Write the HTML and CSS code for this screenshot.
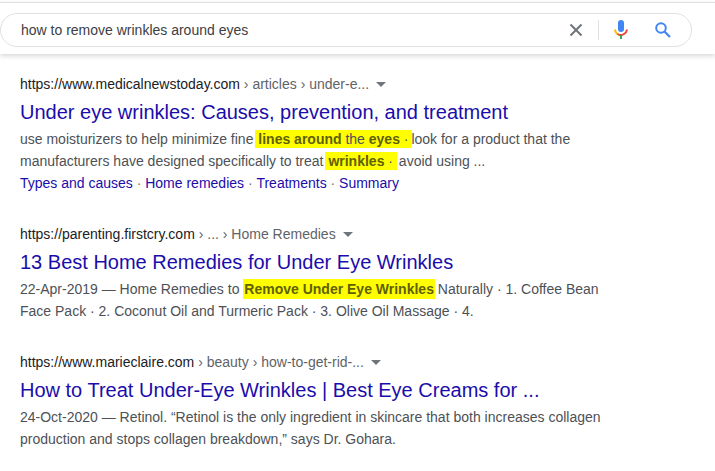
FILE: index.html
```html
<!DOCTYPE html>
<html lang="en">
<head>
<meta charset="utf-8">
<title>how to remove wrinkles around eyes</title>
<link rel="stylesheet" href="styles.css">
</head>
<body>
<header class="header">
  <div class="search">
    <span class="query">how to remove wrinkles around eyes</span>
    <svg class="clear" width="14" height="14" viewBox="0 0 14 14"><path d="M1.5 1.5L12.5 12.5M12.5 1.5L1.5 12.5" stroke="#70757a" stroke-width="2" fill="none"/></svg>
    <span class="sep"></span>
    <svg class="mic" width="14" height="20" viewBox="0 0 14 20">
      <rect x="4" y="0" width="6" height="12" rx="3" fill="#4285f4"/>
      <path d="M1 9.5a6 6 0 0 0 3 4.8" stroke="#fbbc05" stroke-width="2" fill="none"/>
      <path d="M3.5 14a6 6 0 0 0 6.5 0 6 6 0 0 0 3-4.5" stroke="#ea4335" stroke-width="2" fill="none"/>
      <rect x="6" y="15" width="2" height="4" fill="#34a853"/>
    </svg>
    <svg class="magnify" width="16" height="16" viewBox="0 0 16 16"><circle cx="6" cy="6" r="4.8" stroke="#4285f4" stroke-width="2" fill="none"/><path d="M9.5 9.5L15 15" stroke="#4285f4" stroke-width="2.2" fill="none"/></svg>
  </div>
</header>
<main class="results">
  <article class="result">
    <div class="cite">https://www.medicalnewstoday.com<span class="crumb"> › articles › under-e...</span><span class="caret"></span></div>
    <h3 class="title">Under eye wrinkles: Causes, prevention, and treatment</h3>
    <p class="snippet">use moisturizers to help minimize fine <mark class="hl"><b>lines around</b> the <b>eyes</b> · </mark> look for a product that the<br>manufacturers have designed specifically to treat <mark class="hl hl-short"><b>wrinkles</b> ·</mark> avoid using ...</p>
    <div class="links"><a class="link">Types and causes</a><span class="dot">·</span><a class="link">Home remedies</a><span class="dot">·</span><a class="link">Treatments</a><span class="dot">·</span><a class="link">Summary</a></div>
  </article>
  <article class="result">
    <div class="cite">https://parenting.firstcry.com<span class="crumb"> › ... › Home Remedies</span><span class="caret"></span></div>
    <h3 class="title">13 Best Home Remedies for Under Eye Wrinkles</h3>
    <p class="snippet">22-Apr-2019 — Home Remedies to <mark class="hl hl-tall"><b>Remove Under Eye Wrinkles</b></mark> Naturally · 1. Coffee Bean<br>Face Pack · 2. Coconut Oil and Turmeric Pack · 3. Olive Oil Massage · 4.</p>
  </article>
  <article class="result">
    <div class="cite">https://www.marieclaire.com<span class="crumb"> › beauty › how-to-get-rid-...</span><span class="caret"></span></div>
    <h3 class="title">How to Treat Under-Eye Wrinkles | Best Eye Creams for ...</h3>
    <p class="snippet">24-Oct-2020 — Retinol. “Retinol is the only ingredient in skincare that both increases collagen<br>production and stops collagen breakdown,” says Dr. Gohara.</p>
  </article>
</main>
</body>
</html>
```
FILE: styles.css
```css
html, body { margin: 0; padding: 0; background: #fff; overflow: hidden; }
body { width: 715px; height: 471px; font-family: "Liberation Sans", Arial, sans-serif; color: #4d5156; font-size: 14px; }
.header { margin-top: 2px; height: 52px; box-sizing: border-box; border-top: 1px solid #e0e0e0; box-shadow: 0 2px 5px rgba(0,0,0,.16); padding-top: 10px; }
.search { width: 692px; height: 34px; box-sizing: border-box; border: 1px solid #dfe1e5; border-radius: 17px; display: flex; align-items: center; padding-left: 20px; }
.query { font-size: 14px; color: #3c4043; flex: 1; }
.clear { margin-right: 15px; }
.sep { width: 1px; height: 20px; background: #dfe1e5; margin-right: 15px; }
.mic { margin-right: 27px; }
.magnify { margin-right: 20px; }
.results { padding: 20px 0 0 20px; }
.result { margin-bottom: 30px; }
.cite { font-size: 14px; line-height: 20px; color: #202124; display: flex; align-items: center; white-space: pre; }
.crumb { color: #5f6368; }
.caret { width: 0; height: 0; border-top: 5px solid #70757a; border-left: 5px solid transparent; border-right: 5px solid transparent; margin-left: 7px; margin-top: 1px; }
.title { font-size: 20px; line-height: 26px; font-weight: 400; color: #1a0dab; margin: 5px 0 3px; white-space: nowrap; }
.snippet { margin: 0; font-size: 14px; line-height: 22px; color: #4d5156; white-space: nowrap; }
.hl { background: #ffff00; color: #4d5156; padding: 1px 0 1px 3px; margin: 0 -1px 0 -2px; }
.hl b { color: #5f6000; }
.hl-short { padding-right: 4px; margin-right: -2px; }
.hl-tall { padding: 2px 1px; margin: 0 -1px 0 0; }
.links { line-height: 22px; white-space: nowrap; }
.link { color: #1a0dab; }
.dot { color: #70757a; margin: 0 3.85px; }
```
